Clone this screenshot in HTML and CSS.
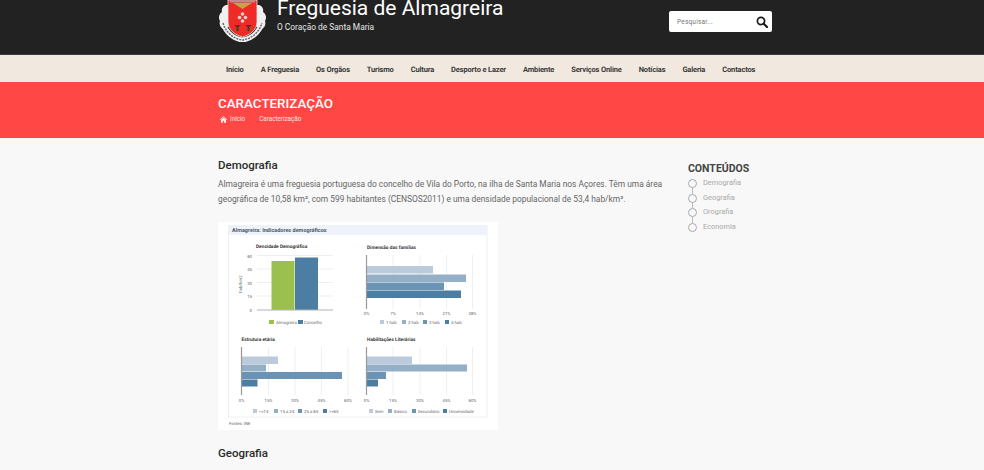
FILE: index.html
```html
<!DOCTYPE html>
<html lang="pt">
<head>
  <meta charset="UTF-8">
  <meta name="viewport" content="width=device-width, initial-scale=1.0">
  <title>Freguesia de Almagreira</title>
  <link rel="stylesheet" href="styles.css">
</head>
<body>

  <header class="site-header">
    <div class="container header-row">
      <div class="brand">
        <svg class="crest" viewBox="0 0 50 50" width="50" height="50" aria-hidden="true">
          <path d="M8 13c-3 1-5 4-4 7-3 2-4 6-2 9-1 3 0 6 3 8l7-3-2-8 1-13zM41 13c3 1 5 4 4 7 3 2 4 6 2 9 1 3 0 6-3 8l-7-3 2-8-1-13z" fill="#f0f0f0"/>
          <path d="M5 31c3 10 11 16 19.500 17 8.500-1 16.500-7 19.500-17" fill="none" stroke="#efefef" stroke-width="5"/>
          <path d="M5 31c3 10 11 16 19.500 17 8.500-1 16.500-7 19.500-17" fill="none" stroke="#666" stroke-width="1.400" stroke-dasharray="2 1"/>
          <path d="M10 8h29v22c0 8-7 13-14.500 15C17 43 10 38 10 30z" fill="#ee2b26" stroke="#e8e8e8" stroke-width="0.800"/>
          <path d="M12 8.500h25v2H12z" fill="#9a9a9a"/>
          <path d="M15 11h19l-9.500 6z" fill="#c9a14a"/>
          <circle cx="24.500" cy="22" r="1.800" fill="#ecd2ce"/>
          <circle cx="21.500" cy="25.500" r="1.800" fill="#ecd2ce"/>
          <circle cx="27.500" cy="25.500" r="1.800" fill="#ecd2ce"/>
          <circle cx="24.500" cy="29" r="1.800" fill="#ecd2ce"/>
          <path d="M16 33h7l-2.500 2v4h-2v-4zM27 33h7l-2.500 2v4h-2v-4z" fill="#4a3a1c"/>
        </svg>
        <div class="brand-text">
          <div class="site-title">Freguesia de Almagreira</div>
          <div class="site-sub">O Coração de Santa Maria</div>
        </div>
      </div>
      <div class="search">
        <span class="search-hint">Pesquisar...</span>
        <svg viewBox="0 0 12 12" width="12" height="12" aria-hidden="true">
          <circle cx="5" cy="5" r="3.6" fill="none" stroke="#1c1c1c" stroke-width="1.7"/>
          <path d="M7.700 7.700l3.300 3.300" stroke="#1c1c1c" stroke-width="2.200" stroke-linecap="round"/>
        </svg>
      </div>
    </div>
  </header>

  <nav class="main-nav">
    <ul class="container nav-list">
      <li>Início</li>
      <li>A Freguesia</li>
      <li>Os Orgãos</li>
      <li>Turismo</li>
      <li>Cultura</li>
      <li>Desporto e Lazer</li>
      <li>Ambiente</li>
      <li>Serviços Online</li>
      <li>Notícias</li>
      <li>Galeria</li>
      <li>Contactos</li>
    </ul>
  </nav>

  <section class="page-title">
    <div class="container">
      <h1>CARACTERIZAÇÃO</h1>
      <div class="crumbs">
        <svg viewBox="0 0 10 9" width="7" height="7" aria-hidden="true"><path d="M5 0l5 4.500-.7.7L5 1.400.7 5.200 0 4.500zM1.500 5.200L5 2.300l3.500 2.900V9H6V6.300H4V9H1.500z" fill="#fff"/></svg>
        <span class="crumb-home">Início</span>
        <span>Caracterização</span>
      </div>
    </div>
  </section>

  <main class="container content">
    <article class="article">
      <h2>Demografia</h2>
      <p>Almagreira é uma freguesia portuguesa do concelho de Vila do Porto, na ilha de Santa Maria nos Açores. Têm uma área geográfica de 10,58 km², com 599 habitantes (CENSOS2011) e uma densidade populacional de 53,4 hab/km².</p>

      <svg class="charts" viewBox="0 0 280 208" width="280" height="208" role="img" aria-label="Almagreira: Indicadores demográficos">
        <rect width="280" height="208" fill="#fff"/>
        <path d="M10.500 3v192H269V3" fill="none" stroke="#eef0f3"/>
        <rect x="11" y="3" width="258" height="10" fill="#eef3fa"/>
        <text class="ch-head" x="14" y="10">Almagreira: Indicadores demográficos</text>
        <text class="ch-title" x="38" y="26">Densidade Demográfica</text>
        <text class="ch-title" x="149" y="26.500">Dimensão das famílias</text>
        <text class="ch-title" x="23.500" y="118.500">Estrutura etária</text>
        <text class="ch-title" x="149" y="118.500">Habilitações Literárias</text>
        <text class="ch-small" x="11" y="203">Fontes: INE</text>

        <g stroke="#eceff3">
          <path d="M39 33.500h76M39 47h76M39 60.500h76M39 74h76"/>
          <path d="M175 33v54M202 33v54M228.500 33v54M254.500 33v54"/>
          <path d="M50.500 125v48M77 125v48M103.500 125v48M130 125v48"/>
          <path d="M175 125v48M202 125v48M228.500 125v48M254.500 125v48"/>
        </g>

        <rect x="53.500" y="39" width="23" height="49" fill="#9bc04d"/>
        <rect x="77" y="35.500" width="23" height="52.500" fill="#4c7da3"/>
        <path d="M39 88h76" stroke="#b4b4b4" stroke-width="1.200"/>
        <text class="ch-label" x="34" y="35.500" text-anchor="end">60</text>
        <text class="ch-label" x="34" y="49" text-anchor="end">45</text>
        <text class="ch-label" x="34" y="62.500" text-anchor="end">30</text>
        <text class="ch-label" x="34" y="76" text-anchor="end">15</text>
        <text class="ch-label" x="34" y="90" text-anchor="end">0</text>
        <text class="ch-label" transform="rotate(-90 24 62)" x="24" y="62" text-anchor="middle">hab/km2</text>
        <rect x="51" y="98" width="5" height="4" fill="#9bc04d"/>
        <text class="ch-label" x="58" y="102">Almagreira</text>
        <rect x="80" y="98" width="5" height="4" fill="#4c7da3"/>
        <text class="ch-label" x="86" y="102">Concelho</text>

        <rect x="149" y="44" width="66" height="7.500" fill="#bccbdb"/>
        <rect x="149" y="52.500" width="99" height="7.500" fill="#94afc6"/>
        <rect x="149" y="60.500" width="77" height="7.500" fill="#6b94b4"/>
        <rect x="149" y="68.500" width="94" height="7.500" fill="#4c7da3"/>
        <path d="M148.500 33v54" stroke="#999" stroke-width="1.200"/>
        <text class="ch-label" x="148.500" y="93" text-anchor="middle">0%</text>
        <text class="ch-label" x="175" y="93" text-anchor="middle">7%</text>
        <text class="ch-label" x="202" y="93" text-anchor="middle">14%</text>
        <text class="ch-label" x="228.500" y="93" text-anchor="middle">21%</text>
        <text class="ch-label" x="254.500" y="93" text-anchor="middle">28%</text>
        <rect x="162" y="98" width="4" height="4" fill="#bccbdb"/>
        <text class="ch-label" x="168" y="102">1 hab</text>
        <rect x="184" y="98" width="4" height="4" fill="#94afc6"/>
        <text class="ch-label" x="190" y="102">2 hab</text>
        <rect x="205" y="98" width="4" height="4" fill="#6b94b4"/>
        <text class="ch-label" x="211" y="102">3 hab</text>
        <rect x="227" y="98" width="4" height="4" fill="#4c7da3"/>
        <text class="ch-label" x="233" y="102">4 hab</text>

        <rect x="24" y="134.500" width="36" height="7.500" fill="#bccbdb"/>
        <rect x="24" y="142.500" width="24" height="7" fill="#94afc6"/>
        <rect x="24" y="150" width="100" height="7" fill="#6b94b4"/>
        <rect x="24" y="157.500" width="15.500" height="7" fill="#4c7da3"/>
        <path d="M23.500 125v48" stroke="#999" stroke-width="1.200"/>
        <text class="ch-label" x="23.500" y="180" text-anchor="middle">0%</text>
        <text class="ch-label" x="50.500" y="180" text-anchor="middle">15%</text>
        <text class="ch-label" x="77" y="180" text-anchor="middle">30%</text>
        <text class="ch-label" x="103.500" y="180" text-anchor="middle">45%</text>
        <text class="ch-label" x="130" y="180" text-anchor="middle">60%</text>
        <rect x="35" y="187" width="4" height="4" fill="#bccbdb"/>
        <text class="ch-label" x="41" y="191">&lt;=14</text>
        <rect x="56" y="187" width="4" height="4" fill="#94afc6"/>
        <text class="ch-label" x="62" y="191">15 a 24</text>
        <rect x="80" y="187" width="4" height="4" fill="#6b94b4"/>
        <text class="ch-label" x="86" y="191">25 a 65</text>
        <rect x="105" y="187" width="4" height="4" fill="#4c7da3"/>
        <text class="ch-label" x="111" y="191">&gt;=65</text>

        <rect x="149" y="134.500" width="45" height="7.500" fill="#bccbdb"/>
        <rect x="149" y="142.500" width="100" height="7" fill="#94afc6"/>
        <rect x="149" y="150" width="19" height="7" fill="#6b94b4"/>
        <rect x="149" y="157.500" width="11" height="7" fill="#4c7da3"/>
        <path d="M148.500 125v48" stroke="#999" stroke-width="1.200"/>
        <text class="ch-label" x="148.500" y="180" text-anchor="middle">0%</text>
        <text class="ch-label" x="175" y="180" text-anchor="middle">15%</text>
        <text class="ch-label" x="202" y="180" text-anchor="middle">30%</text>
        <text class="ch-label" x="228.500" y="180" text-anchor="middle">45%</text>
        <text class="ch-label" x="254.500" y="180" text-anchor="middle">60%</text>
        <rect x="151" y="187" width="4" height="4" fill="#bccbdb"/>
        <text class="ch-label" x="157" y="191">Sem</text>
        <rect x="170" y="187" width="4" height="4" fill="#94afc6"/>
        <text class="ch-label" x="176" y="191">Básico</text>
        <rect x="194" y="187" width="4" height="4" fill="#6b94b4"/>
        <text class="ch-label" x="200" y="191">Secundário</text>
        <rect x="225" y="187" width="4" height="4" fill="#4c7da3"/>
        <text class="ch-label" x="231" y="191">Universidade</text>
      </svg>

      <h2 class="next-heading">Geografia</h2>
    </article>

    <aside class="toc">
      <h3>CONTEÚDOS</h3>
      <ul class="toc-list">
        <li>Demografia</li>
        <li>Geografia</li>
        <li>Orografia</li>
        <li>Economia</li>
      </ul>
    </aside>
  </main>

</body>
</html>
```

FILE: styles.css
```css
html, body {
  height: 470px;
  overflow: hidden;
}

body {
  margin: 0;
  background-color: #f8f8f8;
  font-family: 'Roboto', 'Liberation Sans', sans-serif;
  color: #333;
}

.container {
  width: 554px;
  margin-left: 218px;
}

.site-header {
  height: 54px;
  background-color: #222;
  border-bottom: 1px solid #3d3a37;
  overflow: hidden;
}

.header-row {
  display: flex;
  justify-content: space-between;
  align-items: flex-start;
}

.brand {
  display: flex;
  gap: 9px;
  margin-top: -8px;
}

.crest {
  flex: none;
}

.site-title {
  margin-top: 3px;
  font-size: 21px;
  line-height: 26px;
  color: #fff;
}

.site-sub {
  font-size: 8.4px;
  line-height: 12px;
  color: #e6e6e6;
}

.search {
  display: flex;
  justify-content: space-between;
  align-items: center;
  box-sizing: border-box;
  width: 103px;
  height: 21px;
  margin-top: 11px;
  padding: 0 4px 0 8px;
  background-color: #fff;
  border-radius: 2px;
}

.search-hint {
  font-size: 6.5px;
  letter-spacing: 0.2px;
  color: #777;
}

.main-nav {
  height: 27px;
  background-color: #f1e9e0;
}

.nav-list {
  display: flex;
  align-items: center;
  gap: 17px;
  height: 27px;
  margin-top: 0;
  margin-bottom: 0;
  padding: 1px 0 0 8px;
  box-sizing: border-box;
  list-style: none;
  font-size: 7.5px;
  font-weight: 700;
  letter-spacing: -0.15px;
  text-rendering: geometricPrecision;
  white-space: nowrap;
  color: #3a3a3a;
}

.page-title {
  height: 56px;
  background-color: #ff4845;
  color: #fff;
}

.page-title h1 {
  margin: 0;
  padding-top: 14px;
  font-size: 13.4px;
  line-height: 16px;
  font-weight: 500;
}

.crumbs {
  display: flex;
  align-items: center;
  gap: 3px;
  margin-top: 3px;
  padding-left: 2px;
  font-size: 6.3px;
  line-height: 9px;
  color: #ffe3e2;
}

.crumb-home {
  margin-right: 11px;
}

.content {
  display: flex;
  gap: 20px;
}

.article {
  width: 450px;
  flex: none;
}

.article h2 {
  margin: 0;
  padding-top: 20px;
  font-size: 11.5px;
  line-height: 15px;
  font-weight: 500;
  color: #2b2b2b;
}

.article p {
  margin: 4px 0 0;
  font-size: 8.4px;
  line-height: 14.5px;
  color: #666;
}

.charts {
  display: block;
  margin-top: 16px;
  text-rendering: geometricPrecision;
}

.article .next-heading {
  padding-top: 16px;
}

.ch-head {
  font-size: 5.5px;
  font-weight: 700;
  fill: #4c5a6a;
}

.ch-title {
  font-size: 4.8px;
  font-weight: 700;
  fill: #333;
}

.ch-label {
  font-size: 4.3px;
  fill: #666;
}

.ch-small {
  font-size: 4.2px;
  fill: #666;
}

.toc {
  flex: 1;
  padding-top: 24px;
}

.toc h3 {
  margin: 0;
  font-size: 10.5px;
  line-height: 13px;
  font-weight: 700;
  color: #444;
}

.toc-list {
  margin: 1px 0 0;
  padding: 0;
  list-style: none;
}

.toc-list li {
  position: relative;
  height: 14.5px;
  padding-left: 15px;
  font-size: 7.4px;
  line-height: 14.5px;
  color: #a8a8a8;
}

.toc-list li::before {
  content: "";
  position: absolute;
  left: 0;
  top: 3px;
  box-sizing: border-box;
  width: 9px;
  height: 9px;
  border: 1px solid #aaa;
  border-radius: 50%;
}

.toc-list li + li::after {
  content: "";
  position: absolute;
  left: 4px;
  top: -3px;
  width: 1px;
  height: 6px;
  background-color: #bbb;
}
```
